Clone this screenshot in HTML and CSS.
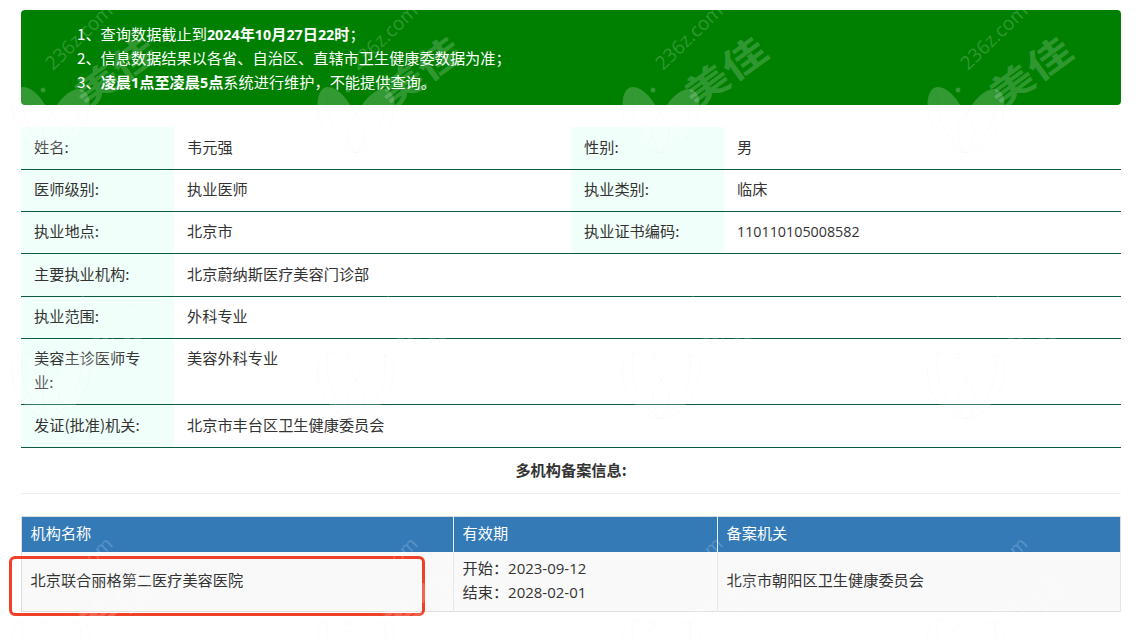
FILE: index.html
```html
<!DOCTYPE html>
<html lang="zh-CN">
<head>
<meta charset="utf-8">
<title>医师查询</title>
<link rel="stylesheet" href="styles.css">
</head>
<body>
<main class="page">
  <section class="notice">
    <p>1、查询数据截止到<b><span class="num">2024</span>年<span class="num">10</span>月<span class="num">27</span>日<span class="num">22</span>时</b>；</p>
    <p>2、信息数据结果以各省、自治区、直辖市卫生健康委数据为准；</p>
    <p>3、<b>凌晨<span class="num">1</span>点至凌晨<span class="num">5</span>点</b>系统进行维护，不能提供查询。</p>
  </section>

  <table class="info">
    <colgroup><col class="c-label"><col class="c-value"><col class="c-label"><col></colgroup>
    <tr class="tall"><th>姓名:</th><td>韦元强</td><th>性别:</th><td>男</td></tr>
    <tr><th>医师级别:</th><td>执业医师</td><th>执业类别:</th><td>临床</td></tr>
    <tr><th>执业地点:</th><td>北京市</td><th>执业证书编码:</th><td><span class="num">110110105008582</span></td></tr>
    <tr class="tall"><th>主要执业机构:</th><td colspan="3">北京蔚纳斯医疗美容门诊部</td></tr>
    <tr><th>执业范围:</th><td colspan="3">外科专业</td></tr>
    <tr><th class="narrow">美容主诊医师专业:</th><td colspan="3">美容外科专业</td></tr>
    <tr class="tall"><th>发证(批准)机关:</th><td colspan="3">北京市丰台区卫生健康委员会</td></tr>
  </table>

  <h2 class="section-title">多机构备案信息:</h2>

  <table class="records">
    <colgroup><col class="r-name"><col class="r-date"><col></colgroup>
    <thead>
      <tr><th>机构名称</th><th>有效期</th><th>备案机关</th></tr>
    </thead>
    <tbody>
      <tr>
        <td>北京联合丽格第二医疗美容医院</td>
        <td>开始：<span class="date">2023-09-12</span><br>结束：<span class="date">2028-02-01</span></td>
        <td>北京市朝阳区卫生健康委员会</td>
      </tr>
    </tbody>
  </table>
</main>

<div class="highlight"></div>

<svg class="watermarks" width="1141" height="641" viewBox="0 0 1141 641" aria-hidden="true">
  <defs>
    <g id="wm">
      <g class="wm-leaf">
        <path d="M2 108C0 92 4 82 12 82C22 82 32 94 40 110C47 96 58 84 68 84C77 85 80 94 78 106C74 128 58 146 40 148C20 146 5 128 2 108Z"/>
        <path class="wm-line" d="M40 110C30 118 28 134 40 148C52 134 50 118 40 110Z"/>
        <path class="wm-line" d="M12 82C8 108 18 134 40 148M68 84C74 108 62 134 40 148"/>
        <circle cx="32" cy="85" r="2.5"/>
      </g>
      <text class="wm-site" transform="translate(42 66) rotate(-44)">236z.com</text>
      <text class="wm-name" transform="translate(103 65) rotate(-36) scale(1 .78)">美佳</text>
    </g>
  </defs>
  <use href="#wm" x="11" y="5"/><use href="#wm" x="316" y="5"/><use href="#wm" x="621" y="5"/><use href="#wm" x="926" y="5"/>
  <use href="#wm" x="11" y="271"/><use href="#wm" x="316" y="271"/><use href="#wm" x="621" y="271"/><use href="#wm" x="926" y="271"/>
  <use href="#wm" x="11" y="538"/><use href="#wm" x="316" y="538"/><use href="#wm" x="621" y="538"/><use href="#wm" x="926" y="538"/>
</svg>
</body>
</html>
```

FILE: styles.css
```css
* { box-sizing: border-box; }

html, body { margin: 0; padding: 0; background: #fff; }

body {
  position: relative;
  width: 1141px;
  height: 641px;
  overflow: hidden;
  font-family: "Noto Sans CJK SC", "Open Sans", sans-serif;
  font-size: 15.2px;
  color: #333;
}

.page { padding: 10px 20px 0 21px; }

.num, .date {
  font-family: "Open Sans", "Noto Sans CJK SC", sans-serif;
  line-height: 0;
}
.num { font-size: 14.3px; }
.date { font-size: 15px; }

.notice {
  height: 95px;
  padding: 11px 56px;
  background: #008000;
  border-radius: 4px;
  color: #fff;
  font-size: 15.2px;
  line-height: 24px;
}
.notice p { margin: 0; }

.info {
  width: 100%;
  margin-top: 22px;
  border-collapse: separate;
  border-spacing: 0;
  table-layout: fixed;
  line-height: 24px;
}
.c-label { width: 153px; }
.c-value { width: 397px; }
.info th, .info td {
  padding: 6px 13px 11px 13px;
  border-bottom: 1px solid #0b5c3b;
  text-align: left;
  vertical-align: top;
  font-weight: 400;
}
.info th { background: #f0fff9; }
.info .narrow { padding-right: 26px; }
.info .tall th, .info .tall td { padding-top: 7px; padding-bottom: 11px; }

.section-title {
  margin: 0 0 22px;
  height: 46px;
  padding-top: 9px;
  border-bottom: 1px solid #eee;
  text-align: center;
  font-size: 15.2px;
  line-height: 24px;
  font-weight: 700;
}

.records {
  width: 100%;
  border-collapse: collapse;
  table-layout: fixed;
  border: 1px solid #ddd;
  line-height: 24px;
}
.r-name { width: 432px; }
.r-date { width: 264px; }
.records th {
  height: 35px;
  padding: 3px 8.5px 7px;
  background: #337ab7;
  color: #fff;
  font-weight: 400;
  text-align: left;
  border-right: 1px solid #e8eef4;
}
.records th:last-child { border-right: 0; }
.records td {
  height: 60px;
  padding: 3px 8.5px 7px;
  background: #f9f9f9;
  border-right: 1px solid #e6e6e6;
  vertical-align: middle;
}

.highlight {
  position: absolute;
  left: 9px;
  top: 556px;
  width: 416px;
  height: 60px;
  border: 3px solid #ee4128;
  border-radius: 6px;
}

.watermarks {
  position: absolute;
  left: 0;
  top: 0;
  pointer-events: none;
}
.wm-leaf path, .wm-leaf circle {
  fill: rgba(255, 255, 255, 0.2);
  stroke: rgba(0, 0, 0, 0.02);
  stroke-width: 1;
}
.wm-leaf .wm-line { fill: none; stroke: rgba(0, 0, 0, 0.018); }
.wm-site, .wm-name {
  fill: rgba(255, 255, 255, 0.2);
  stroke: rgba(0, 0, 0, 0.02);
  stroke-width: 0.5;
}
.wm-site { font-family: "Open Sans", sans-serif; font-size: 19px; }
.wm-name {
  font-family: "Noto Sans CJK SC", sans-serif;
  font-size: 46px;
  font-weight: 700;
  text-anchor: middle;
  dominant-baseline: central;
}
```
